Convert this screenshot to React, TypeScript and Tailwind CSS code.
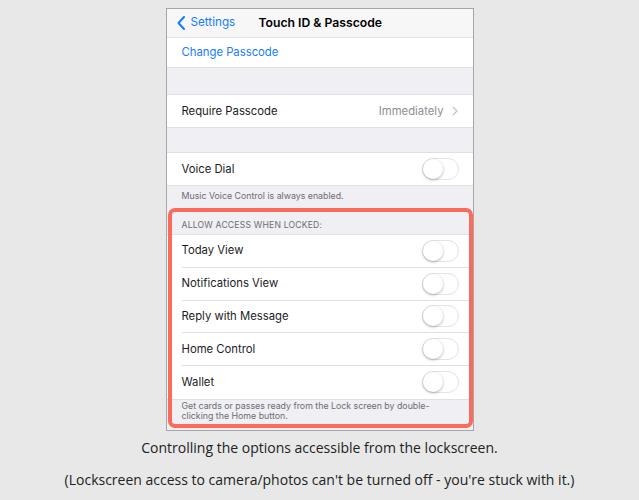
import React from 'react'

const ios = { fontFamily: 'Inter, "Liberation Sans", sans-serif' }

function Toggle() {
  return (
    <div className="relative h-[22px] w-[37px] rounded-full border border-[#e3e3e8] bg-white">
      <div className="absolute left-0 top-0 h-[20px] w-[20px] rounded-full bg-white shadow-[0_1px_3px_rgba(0,0,0,0.3)]" />
    </div>
  )
}

function Row({ label, last, h = 'h-[32px]', children }: { label: string; last?: boolean; h?: string; children?: React.ReactNode }) {
  return (
    <div className="bg-white pl-[15px]">
      <div className={`flex ${h} items-center justify-between pr-[14px] ${last ? '' : 'border-b border-[#e0e0e4]'}`}>
        <span className="text-[11.3px] text-[#1c1c1e]">{label}</span>
        {children}
      </div>
    </div>
  )
}

export default function App() {
  const locked = ['Today View', 'Notifications View', 'Reply with Message', 'Home Control', 'Wallet']

  return (
    <div className="min-h-[500px] w-full bg-[#e8e8e8] pt-[8px]">
      <div className="relative mx-auto w-[308px] border border-[#a6a6a6] bg-[#efeff4]" style={ios}>
        {/* nav */}
        <div className="relative flex h-[29px] items-center border-b border-[#e2e2e2] bg-[#f7f7f7] px-[10px]">
          <svg width="8" height="14" viewBox="0 0 8 14" className="mr-[6px]">
            <path d="M7 1 L1.5 7 L7 13" fill="none" stroke="#157efb" strokeWidth="2" strokeLinecap="round" strokeLinejoin="round" />
          </svg>
          <span className="text-[11.7px] text-[#157efb]">Settings</span>
          <span className="absolute left-[92px] text-[12.2px] font-semibold text-black">Touch ID &amp; Passcode</span>
        </div>

        <div className="flex h-[29px] items-center bg-white pl-[15px] text-[11.3px] text-[#157efb]">Change Passcode</div>
        <div className="h-[28px] border-y border-[#e0e0e4]" />

        <Row label="Require Passcode" last>
          <div className="flex items-center gap-[8px] pr-px text-[11.3px] text-[#8e8e93]">
            <span>Immediately</span>
            <svg width="6" height="10" viewBox="0 0 6 10">
              <path d="M1 1 L5 5 L1 9" fill="none" stroke="#c4c4c8" strokeWidth="1.3" />
            </svg>
          </div>
        </Row>
        <div className="h-[26px] border-y border-[#e0e0e4]" />

        <Row label="Voice Dial" last>
          <Toggle />
        </Row>
        <div className="border-t border-[#e0e0e4] px-[15px] pb-[9px] pt-[4px] text-[8.8px] leading-[12px] text-[#6d6d72]">
          Music Voice Control is always enabled.
        </div>

        <div className="px-[15px] pb-[3px] pt-[8px] text-[8.6px] leading-[12px] tracking-[0.2px] text-[#6d6d72]">ALLOW ACCESS WHEN LOCKED:</div>
        <div className="border-y border-[#e0e0e4]">
          {locked.map((l, i) => (
            <Row key={l} label={l} h="h-[32.75px]" last={i === locked.length - 1}>
              <Toggle />
            </Row>
          ))}
        </div>
        <div className="px-[15px] pb-[9px] pt-[1px] text-[8.8px] leading-[10px] text-[#6d6d72]">
          Get cards or passes ready from the Lock screen by double-clicking the Home button.
        </div>

        {/* highlight */}
        <div className="absolute bottom-[2px] left-[1px] right-[0px] top-[199px] rounded-[7px] border-[4px] border-[#fb6a5b]" />
      </div>

      <div className="pt-[7px] text-center text-[14px] text-[#222]" style={{ fontFamily: '"Open Sans", sans-serif' }}>
        <p className="leading-[20px]">Controlling the options accessible from the lockscreen.</p>
        <p className="mt-[12px] leading-[20px]">(Lockscreen access to camera/photos can't be turned off - you're stuck with it.)</p>
      </div>
    </div>
  )
}
